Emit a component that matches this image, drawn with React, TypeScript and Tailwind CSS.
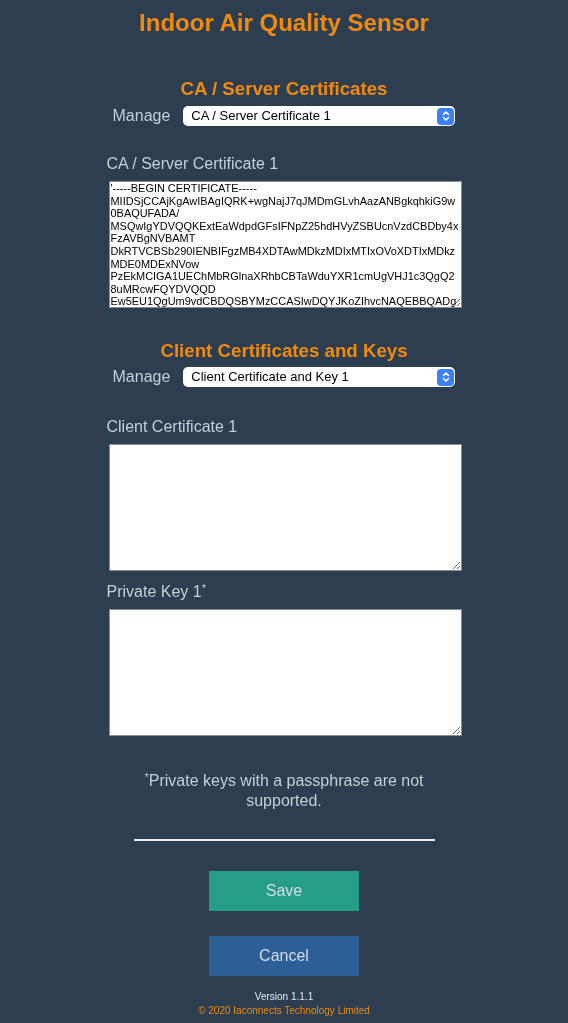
import React from "react";

const CA_CERT = `'-----BEGIN CERTIFICATE-----
MIIDSjCCAjKgAwIBAgIQRK+wgNajJ7qJMDmGLvhAazANBgkqhkiG9w0BAQUFADA/
MSQwIgYDVQQKExtEaWdpdGFsIFNpZ25hdHVyZSBUcnVzdCBDby4xFzAVBgNVBAMT
DkRTVCBSb290IENBIFgzMB4XDTAwMDkzMDIxMTIxOVoXDTIxMDkzMDE0MDExNVow
PzEkMCIGA1UEChMbRGlnaXRhbCBTaWduYXR1cmUgVHJ1c3QgQ28uMRcwFQYDVQQD
Ew5EU1QgUm9vdCBDQSBYMzCCASIwDQYJKoZIhvcNAQEBBQADggEPADCCAQoCggEB
AN+v6ZdQCINXtMxiZfaQguzH0yxrMMpb7NnDfcdAwRgUi+DoM3ZJKuM/IUmTrE4O
rz5Iy2Xu/NMhD2XSKtkyj4zl93ewEnu1lcCJo6m67XMuegwGMoOifooUMM0RoOEq
OLl5CjH9UL2AZd+3UWODyOKIYepLYYHsUmu5ouJLGiifSKOeDNoJjj4XLh7dIN9b
xiqKqy69cK3FCxolkHRyxXtqqzTWMIn/5WgTe1QLyNau7Fqckh49ZLOMxt+/yUFw
-----END CERTIFICATE-----'`;

// macOS-style select with the blue double-chevron box
interface ManageSelectProps {
  options: string[];
}

const ManageSelect: React.FC<ManageSelectProps> = ({ options }) => {
  return (
    <div className="flex items-center px-[6px]">
      <span className="text-[16px] leading-[20px] text-[#c3cfdb]">Manage</span>
      <div className="relative ml-[13px] w-[272px]">
        <select
          defaultValue={options[0]}
          className="block h-[20px] w-full appearance-none rounded-[5px] bg-white pl-[8px] pr-[24px] text-[13px] leading-[20px] text-black outline-none"
        >
          {options.map((o) => (
            <option key={o}>{o}</option>
          ))}
        </select>
        <div className="pointer-events-none absolute right-[1px] top-[1.5px] flex h-[17px] w-[17px] items-center justify-center rounded-[4px] bg-[#3b82f6]">
          <svg width="8" height="12" viewBox="0 0 8 12" fill="none" stroke="white" strokeWidth="1.5" strokeLinecap="round" strokeLinejoin="round">
            <path d="M1.5 4.5 L4 2 L6.5 4.5" />
            <path d="M1.5 7.5 L4 10 L6.5 7.5" />
          </svg>
        </div>
      </div>
    </div>
  );
};

interface CertFieldProps {
  label: React.ReactNode;
  value?: string;
  className?: string;
}

const CertField: React.FC<CertFieldProps> = ({ label, value = "", className = "" }) => {
  return (
    <div className={className}>
      <div className="text-[16px] leading-[20px] text-[#c3cfdb]">{label}</div>
      <textarea
        defaultValue={value}
        spellCheck={false}
        className="ml-[2px] mt-[7px] block h-[127px] w-[353px] resize border border-[#8c8c8c] bg-white px-[1px] pt-0 text-[10.95px] leading-[12.6px] text-black outline-none [scrollbar-width:none]"
      />
    </div>
  );
};

export default function App() {
  return (
    <div
      className="min-h-[1023px] w-full bg-[#2c3e50] pt-[9px]"
      style={{ fontFamily: '"Liberation Sans", Arial, sans-serif' }}
    >
      <h1 className="text-center text-[24px] font-bold leading-[28px] text-[#f08a0f]">
        Indoor Air Quality Sensor
      </h1>

      <div className="mx-auto w-[355px]">
        {/* CA / server certificates */}
        <h2 className="mt-[41px] text-center text-[18.7px] font-bold leading-[22px] text-[#f08a0f]">
          CA / Server Certificates
        </h2>
        <div className="mt-[6px]">
          <ManageSelect options={["CA / Server Certificate 1", "CA / Server Certificate 2", "CA / Server Certificate 3"]} />
        </div>
        <CertField className="mt-[28px]" label="CA / Server Certificate 1" value={CA_CERT} />

        {/* Client certificates */}
        <h2 className="mt-[32px] text-center text-[18.7px] font-bold leading-[22px] text-[#f08a0f]">
          Client Certificates and Keys
        </h2>
        <div className="mt-[5px]">
          <ManageSelect options={["Client Certificate and Key 1", "Client Certificate and Key 2", "Client Certificate and Key 3"]} />
        </div>
        <CertField className="mt-[30px]" label="Client Certificate 1" />
        <CertField
          className="mt-[11px]"
          label={
            <>
              Private Key 1<sup className="text-[11px]">*</sup>
            </>
          }
        />
      </div>

      <div className="mx-auto mt-[35px] w-[301px] text-center text-[16px] leading-[20px] text-[#c3cfdb]">
        <sup className="text-[11px]">*</sup>Private keys with a passphrase are not supported.
      </div>

      <hr className="mx-auto mt-[28px] w-[301px] border-0 border-t-[2px] border-[#e8ecef]" />

      <div className="mt-[30px] flex flex-col items-center gap-[25px]">
        <button className="h-[40px] w-[150px] bg-[#269e87] text-[16px] text-[#d2dce5]">Save</button>
        <button className="h-[40px] w-[150px] bg-[#2d5f96] text-[16px] text-[#d2dce5]">Cancel</button>
      </div>

      <div className="mt-[14px] text-center text-[10px] leading-[14px] text-[#e6eaee]">Version 1.1.1</div>
      <div className="text-center text-[10px] leading-[14px] text-[#f08a0f]">© 2020 Iaconnects Technology Limited</div>
    </div>
  );
}
